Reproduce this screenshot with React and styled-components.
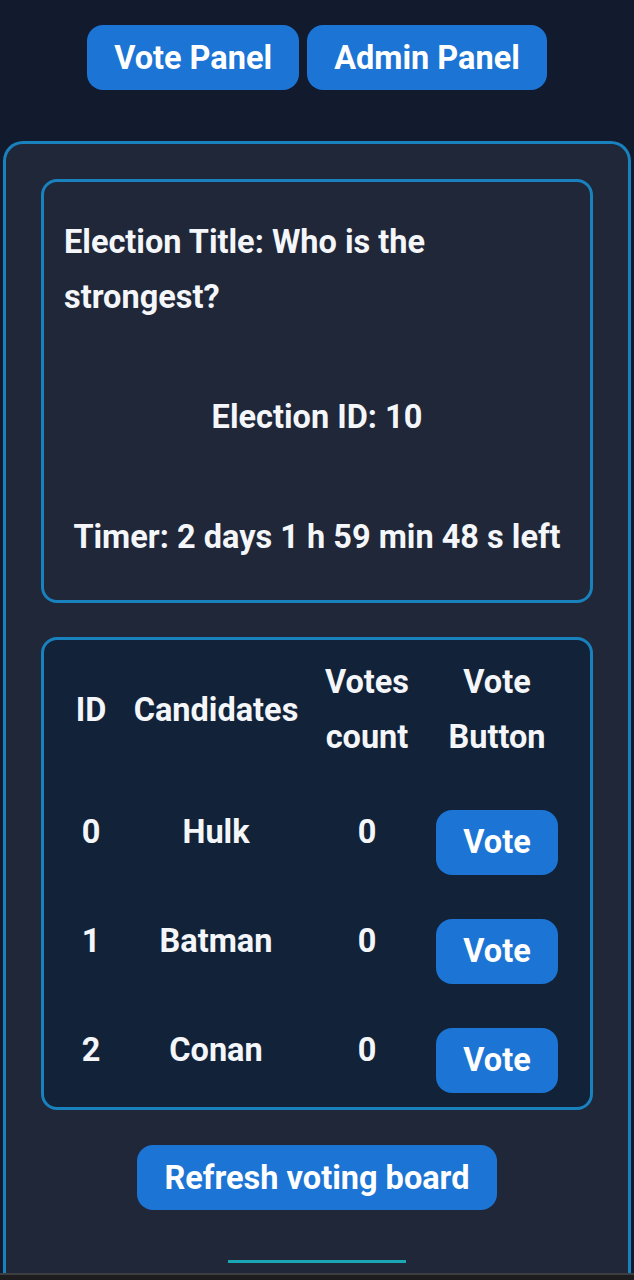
import React from "react";
import styled, { createGlobalStyle } from "styled-components";

const GlobalStyle = createGlobalStyle`
  html, body {
    margin: 0;
    padding: 0;
    background: #121a2d;
  }
  body {
    font-family: Roboto, "Liberation Sans", sans-serif;
    color: #f4f6fa;
  }
`;

const Page = styled.div`
  width: 634px;
  height: 1280px;
  overflow: hidden;
  display: flex;
  flex-direction: column;
  background: #121a2d;
`;

// Top navigation
const Nav = styled.nav`
  display: flex;
  justify-content: center;
  gap: 8px;
  padding: 25px 0 51px;
`;

const Button = styled.button`
  font-family: Roboto, "Liberation Sans", sans-serif;
  font-weight: 700;
  font-size: 32.5px;
  color: #ffffff;
  background: #1c74d4;
  border: none;
  border-radius: 16px;
  height: 65px;
  padding: 0 27px;
  cursor: pointer;
`;

// Main panel
const Panel = styled.main`
  flex: 1;
  margin: 0 3px;
  border: 3px solid #1981be;
  border-bottom: none;
  border-radius: 20px 20px 0 0;
  background: #1f2739;
  padding: 35px 35px 0;
  display: flex;
  flex-direction: column;
  align-items: center;
`;

const Card = styled.section`
  align-self: stretch;
  border: 3px solid #1981be;
  border-radius: 16px;
  background: ${({ dark }) => (dark ? "#122339" : "#1f2739")};
`;

const InfoCard = styled(Card)`
  display: flex;
  flex-direction: column;
  gap: 65px;
  padding: 33px 20px 35px;
`;

const Line = styled.p`
  margin: 0;
  font-size: 32.5px;
  font-weight: 700;
  line-height: 55px;
  text-align: ${({ center }) => (center ? "center" : "left")};
`;

const TableCard = styled(Card)`
  margin-top: 34px;
  padding: 15px 16px 2px 20px;
`;

const Row = styled.div`
  display: grid;
  grid-template-columns: 54px 196px 106px 154px;
  align-items: center;
  height: ${({ head }) => (head ? 110 : 109)}px;
  margin-bottom: ${({ head }) => (head ? 13 : 0)}px;
`;

const Cell = styled.div`
  text-align: center;
  font-size: 32.5px;
  font-weight: 700;
  line-height: 55px;
`;

const VoteCell = styled.div`
  display: flex;
  justify-content: center;
  padding-top: 19px;
`;

const Refresh = styled(Button)`
  margin-top: 35px;
`;

const Progress = styled.div`
  margin-top: 50px;
  width: 178px;
  height: 3px;
  background: #1ba6b6;
`;

const BottomBar = styled.div`
  height: 5px;
  border-top: 2px solid #3d3e40;
  background: #1d1d1f;
`;

const candidates = [
  { id: 0, name: "Hulk", votes: 0 },
  { id: 1, name: "Batman", votes: 0 },
  { id: 2, name: "Conan", votes: 0 },
];

export default function App() {
  return (
    <Page>
      <GlobalStyle />
      <Nav>
        <Button>Vote Panel</Button>
        <Button>Admin Panel</Button>
      </Nav>
      <Panel>
        <InfoCard>
          <Line>Election Title: Who is the strongest?</Line>
          <Line center>Election ID: 10</Line>
          <Line center>Timer: 2 days 1 h 59 min 48 s left</Line>
        </InfoCard>

        <TableCard dark>
          <Row head>
            <Cell>ID</Cell>
            <Cell>Candidates</Cell>
            <Cell>Votes count</Cell>
            <Cell>Vote Button</Cell>
          </Row>
          {candidates.map((c) => (
            <Row key={c.id}>
              <Cell>{c.id}</Cell>
              <Cell>{c.name}</Cell>
              <Cell>{c.votes}</Cell>
              <VoteCell>
                <Button>Vote</Button>
              </VoteCell>
            </Row>
          ))}
        </TableCard>

        <Refresh>Refresh voting board</Refresh>
        <Progress />
      </Panel>
      <BottomBar />
    </Page>
  );
}
